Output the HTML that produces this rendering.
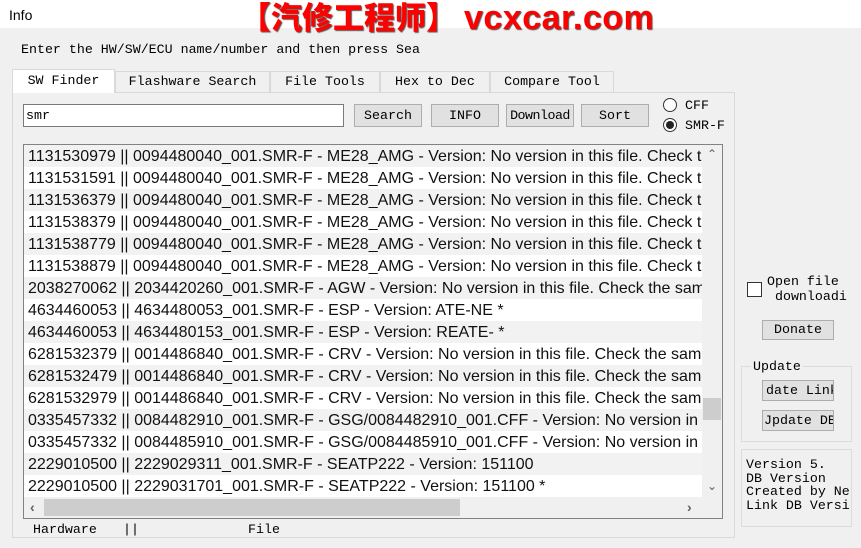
<!DOCTYPE html>
<html><head><meta charset="utf-8"><style>
*{margin:0;padding:0;box-sizing:border-box}
body{width:861px;height:548px;background:#f0f0f0;position:relative;overflow:hidden;font-family:"Liberation Mono",monospace;font-size:13.3px;color:#000}
.a{position:absolute}
.btn{position:absolute;background:#e1e1e1;border:1px solid #adadad;text-align:center;line-height:17px;white-space:nowrap;overflow:hidden}
.tab{position:absolute;top:71px;height:21px;border:1px solid #d9d9d9;border-bottom:none;background:#f0f0f0;line-height:20px;text-align:center}
.row{height:22px;line-height:23px;font-family:"Liberation Sans",sans-serif;font-size:16px;padding-left:4px;white-space:nowrap;color:#111}
.row:nth-child(odd){background:#f2f2f2}
.row:nth-child(even){background:#fff}
</style></head><body>
<div class="a" style="left:0;top:0;width:861px;height:28px;background:#fff"></div>
<div class="a" style="left:9px;top:7px;font-family:'Liberation Sans',sans-serif;font-size:14px">Info</div>
<div class="a" style="left:240px;top:0;font-family:'Liberation Sans','Noto Sans CJK SC',sans-serif;font-size:31px;font-weight:900;color:#f00;line-height:38px;text-shadow:1px 1px 1px #555;white-space:nowrap">【汽修工程师】</div>
<div class="a" style="left:464px;top:-1px;font-family:'Liberation Sans',sans-serif;font-size:34px;font-weight:bold;color:#f00;line-height:38px;text-shadow:1px 1px 1px #555;white-space:nowrap;letter-spacing:0.5px">vcxcar.com</div>
<div class="a" style="left:21px;top:42px;white-space:nowrap">Enter the HW/SW/ECU name/number and then press Sea</div>
<div class="a" style="left:12px;top:92px;width:723px;height:446px;border:1px solid #d9d9d9;background:#f0f0f0"></div>
<div class="tab" style="left:12px;width:103px;top:69px;height:24px;background:#fff;border-color:#d9d9d9;line-height:22px">SW Finder</div>
<div class="tab" style="left:115px;width:155px">Flashware Search</div>
<div class="tab" style="left:270px;width:110px">File Tools</div>
<div class="tab" style="left:380px;width:110px;text-align:left;padding-left:14px">Hex to Dec</div>
<div class="tab" style="left:490px;width:124px">Compare Tool</div>
<div class="a" style="left:23px;top:104px;width:321px;height:23px;background:#fff;border:1px solid #7a7a7a;padding-left:2px;line-height:21px">smr</div>
<div class="btn" style="left:354px;top:104px;width:68px;height:23px;line-height:21px">Search</div>
<div class="btn" style="left:431px;top:104px;width:68px;height:23px;line-height:21px">INFO</div>
<div class="btn" style="left:506px;top:104px;width:68px;height:23px;line-height:21px;letter-spacing:-0.5px">Download</div>
<div class="btn" style="left:581px;top:104px;width:68px;height:23px;line-height:21px">Sort</div>
<div class="a" style="left:663px;top:98px;width:14px;height:14px;border:1px solid #333;border-radius:50%;background:#fff"></div>
<div class="a" style="left:685px;top:98px">CFF</div>
<div class="a" style="left:663px;top:118px;width:14px;height:14px;border:1px solid #333;border-radius:50%;background:#fff"><div style="margin:2px;width:8px;height:8px;border-radius:50%;background:#222"></div></div>
<div class="a" style="left:685px;top:118px">SMR-F</div>
<div class="a" style="left:23px;top:144px;width:700px;height:375px;border:1px solid #828282;background:#fff;overflow:hidden">
<div style="width:678px;height:352px;overflow:hidden">
<div class="row">1131530979 || 0094480040_001.SMR-F - ME28_AMG - Version: No version in this file. Check the same</div>
<div class="row">1131531591 || 0094480040_001.SMR-F - ME28_AMG - Version: No version in this file. Check the same</div>
<div class="row">1131536379 || 0094480040_001.SMR-F - ME28_AMG - Version: No version in this file. Check the same</div>
<div class="row">1131538379 || 0094480040_001.SMR-F - ME28_AMG - Version: No version in this file. Check the same</div>
<div class="row">1131538779 || 0094480040_001.SMR-F - ME28_AMG - Version: No version in this file. Check the same</div>
<div class="row">1131538879 || 0094480040_001.SMR-F - ME28_AMG - Version: No version in this file. Check the same</div>
<div class="row">2038270062 || 2034420260_001.SMR-F - AGW - Version: No version in this file. Check the same</div>
<div class="row">4634460053 || 4634480053_001.SMR-F - ESP - Version: ATE-NE *</div>
<div class="row">4634460053 || 4634480153_001.SMR-F - ESP - Version: REATE- *</div>
<div class="row">6281532379 || 0014486840_001.SMR-F - CRV - Version: No version in this file. Check the same</div>
<div class="row">6281532479 || 0014486840_001.SMR-F - CRV - Version: No version in this file. Check the same</div>
<div class="row">6281532979 || 0014486840_001.SMR-F - CRV - Version: No version in this file. Check the same</div>
<div class="row">0335457332 || 0084482910_001.SMR-F - GSG/0084482910_001.CFF - Version: No version in this</div>
<div class="row">0335457332 || 0084485910_001.SMR-F - GSG/0084485910_001.CFF - Version: No version in this</div>
<div class="row">2229010500 || 2229029311_001.SMR-F - SEATP222 - Version: 151100</div>
<div class="row">2229010500 || 2229031701_001.SMR-F - SEATP222 - Version: 151100 *</div>
</div>
<div class="a" style="left:678px;top:0;width:20px;height:352px;background:#f0f0f0"></div>
<div class="a" style="left:683px;top:2px;color:#606060;font-family:'Liberation Sans';font-size:12px">&#8963;</div>
<div class="a" style="left:679px;top:253px;width:18px;height:22px;background:#cdcdcd"></div>
<div class="a" style="left:683px;top:334px;color:#606060;font-family:'Liberation Sans';font-size:12px">&#8964;</div>
<div class="a" style="left:0;top:352px;width:698px;height:21px;background:#f0f0f0"></div>
<div class="a" style="left:20px;top:354px;width:416px;height:17px;background:#cdcdcd"></div>
<div class="a" style="left:6px;top:354px;color:#606060;font-family:'Liberation Sans';font-size:14px;font-weight:bold">&lsaquo;</div>
<div class="a" style="left:663px;top:354px;color:#606060;font-family:'Liberation Sans';font-size:14px;font-weight:bold">&rsaquo;</div>
</div>
<div class="a" style="left:33px;top:522px">Hardware</div>
<div class="a" style="left:123px;top:522px">||</div>
<div class="a" style="left:248px;top:522px">File</div>
<div class="a" style="left:747px;top:282px;width:15px;height:15px;border:1px solid #333;background:#fff"></div>
<div class="a" style="left:767px;top:274px;line-height:15px">Open file<br>&nbsp;downloadi</div>
<div class="btn" style="left:762px;top:320px;width:72px;height:20px;line-height:18px">Donate</div>
<div class="a" style="left:741px;top:366px;width:111px;height:76px;border:1px solid #dcdcdc"></div>
<div class="a" style="left:751px;top:359px;background:#f0f0f0;padding:0 2px">Update</div>
<div class="btn" style="left:762px;top:380px;width:72px;height:21px;line-height:19px;text-align:left;padding-left:3px">date Link</div>
<div class="btn" style="left:762px;top:410px;width:72px;height:21px;line-height:19px;text-align:left;padding-left:1px">Jpdate DB</div>
<div class="a" style="left:741px;top:449px;width:111px;height:78px;border:1px solid #dcdcdc;overflow:hidden;padding:8px 0 0 4px;line-height:13.5px;white-space:nowrap">Version 5.<br>DB Version<br>Created by Ne<br>Link DB Versi</div>
</body></html>
